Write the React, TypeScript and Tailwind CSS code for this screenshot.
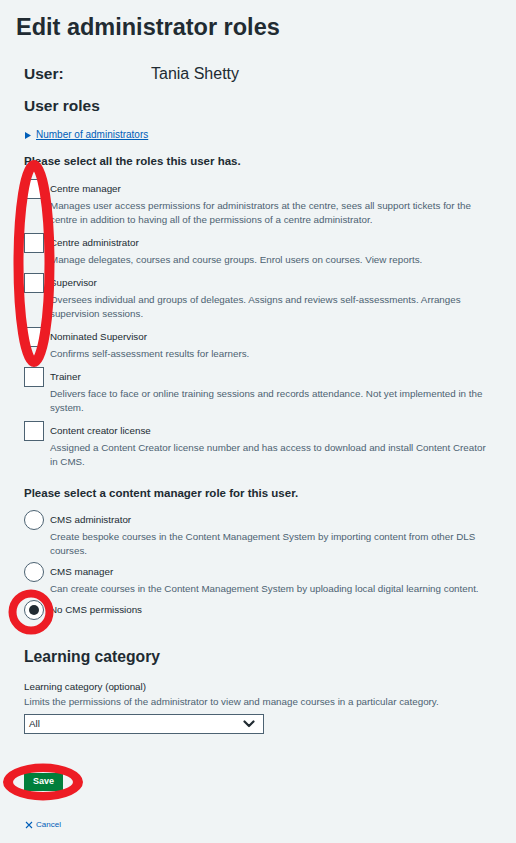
import React from "react";

const checkboxes: { label: string; hint: string[] }[] = [
  {
    label: "Centre manager",
    hint: [
      "Manages user access permissions for administrators at the centre, sees all support tickets for the",
      "centre in addition to having all of the permissions of a centre administrator.",
    ],
  },
  {
    label: "Centre administrator",
    hint: ["Manage delegates, courses and course groups. Enrol users on courses. View reports."],
  },
  {
    label: "Supervisor",
    hint: [
      "Oversees individual and groups of delegates. Assigns and reviews self-assessments. Arranges",
      "supervision sessions.",
    ],
  },
  {
    label: "Nominated Supervisor",
    hint: ["Confirms self-assessment results for learners."],
  },
  {
    label: "Trainer",
    hint: [
      "Delivers face to face or online training sessions and records attendance. Not yet implemented in the",
      "system.",
    ],
  },
  {
    label: "Content creator license",
    hint: [
      "Assigned a Content Creator license number and has access to download and install Content Creator",
      "in CMS.",
    ],
  },
];

const radios: { label: string; hint?: string[]; checked?: boolean }[] = [
  {
    label: "CMS administrator",
    hint: [
      "Create bespoke courses in the Content Management System by importing content from other DLS",
      "courses.",
    ],
  },
  {
    label: "CMS manager",
    hint: ["Can create courses in the Content Management System by uploading local digital learning content."],
  },
  { label: "No CMS permissions", checked: true },
];

function Hint({ lines }: { lines: string[] }) {
  return (
    <div className="text-[9.8px] leading-[14px] text-[#4c6272]">
      {lines.map((l) => (
        <div key={l} className="whitespace-nowrap">
          {l}
        </div>
      ))}
    </div>
  );
}

export default function App() {
  return (
    <div className="relative min-h-screen overflow-hidden bg-[#f0f4f5] font-['Liberation_Sans',Arial,sans-serif] text-[#212b32]">
      <h1 className="pl-[16px] pt-[11px] text-[23.5px] font-bold leading-[32px]">
        Edit administrator roles
      </h1>

      <div className="pl-[24px] pr-[16px]">
        <div className="mt-[21px] flex h-[20px] items-center">
          <span className="w-[127px] text-[15.5px] font-bold">User:</span>
          <span className="text-[16px]">Tania Shetty</span>
        </div>

        <h2 className="mt-[12px] text-[15.5px] font-bold leading-[20px]">User roles</h2>

        <div className="mt-[12px] flex h-[14px] items-center">
          <svg width="6" height="7" viewBox="0 0 6 7" className="ml-[1px]">
            <polygon points="0,0 6,3.5 0,7" fill="#005eb8" />
          </svg>
          <span className="ml-[5px] text-[10px] leading-[14px] text-[#005eb8] underline">
            Number of administrators
          </span>
        </div>

        <p className="mt-[11px] text-[11.5px] font-bold leading-[16px]">
          Please select all the roles this user has.
        </p>

        <div className="mt-[10px] flex flex-col gap-[6px]">
          {checkboxes.map((c) => (
            <div key={c.label} className="grid grid-cols-[20px_1fr] gap-x-[6px]">
              <div className="h-[20px] w-[20px] border border-[#4c6272] bg-white" />
              <div className="text-[9.8px] leading-[20px]">{c.label}</div>
              <div />
              <Hint lines={c.hint} />
            </div>
          ))}
        </div>

        <p className="mt-[16px] text-[11.5px] font-bold leading-[16px]">
          Please select a content manager role for this user.
        </p>

        <div className="mt-[9px] flex flex-col gap-[4px]">
          {radios.map((r) => (
            <div key={r.label} className="grid grid-cols-[20px_1fr] gap-x-[6px]">
              <div className="flex h-[20px] w-[20px] items-center justify-center rounded-full border border-[#4c6272] bg-white">
                {r.checked && <div className="h-[10px] w-[10px] rounded-full bg-[#212b32]" />}
              </div>
              <div className="text-[9.8px] leading-[20px]">{r.label}</div>
              {r.hint && (
                <>
                  <div />
                  <Hint lines={r.hint} />
                </>
              )}
            </div>
          ))}
        </div>

        <h2 className="mt-[27px] text-[15.7px] font-bold leading-[20px]">Learning category</h2>

        <p className="mt-[13px] text-[9.8px] leading-[14px]">Learning category (optional)</p>
        <p className="mt-[1px] whitespace-nowrap text-[9.8px] leading-[14px] text-[#4c6272]">
          Limits the permissions of the administrator to view and manage courses in a particular category.
        </p>

        <div className="mt-[5px] flex h-[20px] w-[240px] items-center justify-between border border-[#4c6272] bg-white pl-[4px] pr-[8px]">
          <span className="text-[9.8px]">All</span>
          <svg width="12" height="8" viewBox="0 0 12 8">
            <path d="M1.5 1.5 L6 6 L10.5 1.5" fill="none" stroke="#212b32" strokeWidth="2.2" strokeLinecap="round" strokeLinejoin="round" />
          </svg>
        </div>

        <div className="mt-[39px] flex h-[18px] w-[39px] items-center justify-center bg-[#007f3b] text-[9px] font-bold text-white">
          Save
        </div>

        <div className="mt-[28px] flex h-[12px] items-center">
          <svg width="8" height="8" viewBox="0 0 8 8" className="ml-[1px]">
            <path d="M1 1 L7 7 M7 1 L1 7" stroke="#005eb8" strokeWidth="1.1" />
          </svg>
          <span className="ml-[3px] text-[8px] leading-[12px] text-[#005eb8]">Cancel</span>
        </div>
      </div>

      <svg
        className="pointer-events-none absolute left-0 top-0"
        width="516"
        height="843"
        viewBox="0 0 516 843"
      >
        <ellipse cx="34" cy="263.5" rx="15.5" ry="98.5" fill="none" stroke="#ed1c24" strokeWidth="10" />
        <circle cx="31" cy="612" r="18.5" fill="none" stroke="#ed1c24" strokeWidth="8" />
        <path
          d="M3 782 a40 18.5 0 1 0 80 0 a40 18.5 0 1 0 -80 0 Z M13 782 a30 10 0 1 0 60 0 a30 10 0 1 0 -60 0 Z"
          fill="#ed1c24"
          fillRule="evenodd"
        />
      </svg>
    </div>
  );
}
